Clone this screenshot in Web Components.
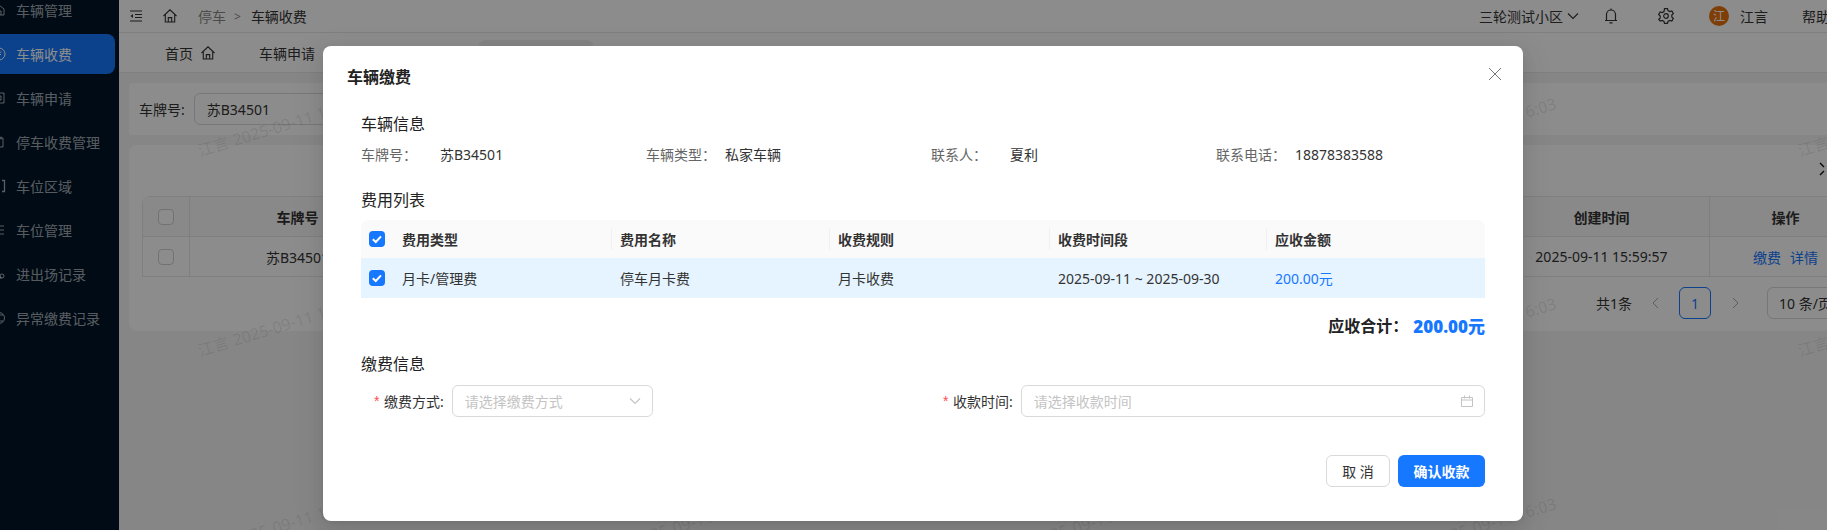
<!DOCTYPE html>
<html lang="zh">
<head>
<meta charset="utf-8">
<title>车辆收费</title>
<style>
  html, body { margin: 0; height: 100%; overflow: hidden; }
  body { font-family: "Noto Sans", "Noto Sans CJK SC", sans-serif; font-size: 14px; color: #333; }
</style>
</head>
<body>
<park-app></park-app>
<script>
const ICON = {
  home: '<svg viewBox="0 0 16 16" width="16" height="16" fill="none" stroke="currentColor" stroke-width="1.1"><path d="M1.5 8 8 1.8 14.5 8M3.3 6.6V14h9.4V6.6M6.3 14V9.6h3.4V14"/></svg>',
  fold: '<svg viewBox="0 0 14 14" width="14" height="14" fill="none" stroke="currentColor" stroke-width="1.2"><path d="M1 2h12M6 5.5h7M6 8.5h7M1 12h12"/><path d="M4 5 1.5 7 4 9z" fill="currentColor" stroke="none"/></svg>',
  bell: '<svg viewBox="0 0 16 16" width="16" height="16" fill="none" stroke="currentColor" stroke-width="1.2"><path d="M3.5 12.5V6.5a4.5 4.5 0 0 1 9 0v6M2 12.5h12M6.5 14.8h3M8 .6V2"/></svg>',
  gear: '<svg viewBox="0 0 16 16" width="16" height="16" fill="none" stroke="currentColor" stroke-width="1.2"><path d="M6.5 1.2h3l.5 2 1.8 1 2-.6 1.5 2.6-1.5 1.5v1.9l1.5 1.4-1.5 2.6-2-.6-1.8 1-.5 2h-3l-.5-2-1.8-1-2 .6L.7 12l1.5-1.4V8.7L.7 7.2l1.5-2.6 2 .6 1.8-1z" transform="translate(0 -.6)"/><circle cx="8" cy="8" r="2.3"/></svg>',
  down: '<svg viewBox="0 0 12 12" width="12" height="12" fill="none" stroke="currentColor" stroke-width="1.1"><path d="M1 3.5 6 8.5 11 3.5"/></svg>',
  cal: '<svg viewBox="0 0 12 12" width="12" height="12" fill="none" stroke="currentColor" stroke-width="1"><path d="M.5 2.5h11v9H.5zM.5 5h11M3.5 .5v3M8.5 .5v3"/></svg>',
  close: '<svg viewBox="0 0 14 14" width="14" height="14" fill="none" stroke="currentColor" stroke-width="1"><path d="M1 1l12 12M13 1 1 13"/></svg>',
  expand: '<svg viewBox="0 0 14 14" width="14" height="14" fill="none" stroke="currentColor" stroke-width="1.4"><path d="M1 1l4 4M13 13 9 9M1 13l4-4M13 1 9 5"/></svg>',
  left: '<svg viewBox="0 0 7 12" width="7" height="12" fill="none" stroke="currentColor"><path d="M6 1 1 6l5 5"/></svg>',
  right: '<svg viewBox="0 0 7 12" width="7" height="12" fill="none" stroke="currentColor"><path d="M1 1l5 5-5 5"/></svg>',
  car: '<svg viewBox="0 0 14 14" width="14" height="14" fill="none" stroke="currentColor"><path d="M2 12V6l5-4 5 4v6zM5 12V8h4v4"/></svg>',
  coin: '<svg viewBox="0 0 14 14" width="14" height="14" fill="none" stroke="currentColor"><circle cx="7" cy="7" r="6"/><path d="M5 4.5 7 7l2-2.5M5 7.5h4M7 7v3"/></svg>',
  form: '<svg viewBox="0 0 14 14" width="14" height="14" fill="none" stroke="currentColor"><path d="M2 2h10v10H2zM5 5h4v4H5z"/></svg>',
  doc: '<svg viewBox="0 0 14 14" width="14" height="14" fill="none" stroke="currentColor"><path d="M3 3h8v9H3zM5 1.5v3M9 1.5v3"/></svg>',
  area: '<svg viewBox="0 0 14 14" width="14" height="14" fill="none" stroke="currentColor" stroke-width="1.3"><path d="M4 1.5H1.5v11H4M10 1.5h2.5v11H10"/></svg>',
  list: '<svg viewBox="0 0 14 14" width="14" height="14" fill="none" stroke="currentColor"><path d="M2 3h10M2 7h10M2 11h10"/></svg>',
  log: '<svg viewBox="0 0 14 14" width="14" height="14" fill="none" stroke="currentColor"><circle cx="5" cy="4" r="2"/><path d="M1 12c0-3 2-4 4-4s4 1 4 4"/><circle cx="10" cy="9" r="2"/></svg>',
  warn: '<svg viewBox="0 0 14 14" width="14" height="14" fill="none" stroke="currentColor"><circle cx="7" cy="7" r="5.5"/><path d="M3 4h8M3 10h8"/></svg>'
};

class SideNav extends HTMLElement {
  constructor() {
    super();
    this.attachShadow({ mode: 'open' });
    const items = [
      ['车辆管理', ICON.car], ['车辆收费', ICON.coin, true], ['车辆申请', ICON.form], ['停车收费管理', ICON.doc],
      ['车位区域', ICON.area], ['车位管理', ICON.list], ['进出场记录', ICON.log], ['异常缴费记录', ICON.warn]
    ];
    this.shadowRoot.innerHTML = `
      <style>
        :host { display: block; width: 119px; flex: none; background: #001529; overflow: hidden; color: rgba(255,255,255,.65); font-size: 14px; }
        ul { list-style: none; margin: -10px 0 0; padding: 0; display: flex; flex-direction: column; gap: 4px; }
        li { height: 40px; width: 135px; margin-left: -20px; padding-left: 12px; box-sizing: border-box; display: flex; align-items: center; gap: 10px; border-radius: 8px; white-space: nowrap; }
        li.on { background: #1677ff; color: #fff; }
        svg { display: block; flex: none; }
      </style>
      <ul>${items.map(([t, i, on]) => `<li class="${on ? 'on' : ''}">${i}<span>${t}</span></li>`).join('')}</ul>
    `;
  }
}
customElements.define('side-nav', SideNav);

class TopBar extends HTMLElement {
  constructor() {
    super();
    this.attachShadow({ mode: 'open' });
    this.shadowRoot.innerHTML = `
      <style>
        :host { display: flex; align-items: center; height: 32px; flex: none; padding-left: 10px; background: #fff; border-bottom: 1px solid #e8e8e8; font-size: 14px; color: #333; white-space: nowrap; }
        svg { display: block; flex: none; }
        .home { margin-left: 19px; }
        .crumb { margin-left: 20px; color: #888; }
        .sep { margin: 0 10px 0 8px; color: #888; font-size: 12px; }
        .right { margin-left: auto; display: flex; align-items: center; margin-right: -3px; }
        .ava { width: 20px; height: 20px; border-radius: 50%; background: #e8710a; color: #fff; font-size: 12px; display: grid; place-items: center; }
      </style>
      ${ICON.fold}
      <span class="home">${ICON.home}</span>
      <span class="crumb">停车</span><span class="sep">&gt;</span><span>车辆收费</span>
      <div class="right">
        <span>三轮测试小区</span>
        <span style="margin-left:4px">${ICON.down}</span>
        <span style="margin-left:24px">${ICON.bell}</span>
        <span style="margin-left:39px">${ICON.gear}</span>
        <span class="ava" style="margin-left:35px">江</span>
        <span style="margin-left:11px">江言</span>
        <span style="margin-left:34px">帮助</span>
      </div>
    `;
  }
}
customElements.define('top-bar', TopBar);

class TabStrip extends HTMLElement {
  constructor() {
    super();
    this.attachShadow({ mode: 'open' });
    this.shadowRoot.innerHTML = `
      <style>
        :host { display: flex; height: 39px; flex: none; background: #fff; border-bottom: 1px solid #e8e8e8; font-size: 14px; padding-left: 46px; white-space: nowrap; }
        span { display: flex; align-items: center; }
        .first { gap: 7px; }
        .act { width: 114px; box-sizing: border-box; margin-top: 7px; background: #f0f0f0; color: #1677ff; padding: 0 0 7px 23px; border-radius: 6px 6px 0 0; }
      </style>
      <span class="first">首页${ICON.home}</span>
      <span style="margin-left:43px">车辆申请</span>
      <span style="margin-left:68px">车辆管理</span>
      <span class="act" style="margin-left:40px">车辆收费</span>
      <span style="margin-left:29px">车位区域</span>
      <span style="margin-left:62px">车位管理</span>
      <span style="margin-left:76px">进出场记录</span>
      <span style="margin-left:78px">异常缴费记录</span>
    `;
  }
}
customElements.define('tab-strip', TabStrip);

class BgTable extends HTMLElement {
  constructor() {
    super();
    this.attachShadow({ mode: 'open' });
    this.shadowRoot.innerHTML = `
      <style>
        :host { display: block; font-size: 14px; color: #333; }
        .grid { display: grid; width: max-content; grid-template-columns: 47px 216px 1088px 216px 152px; grid-template-rows: 40px 40px; border-left: 1px solid #e8e8e8; border-top: 1px solid #e8e8e8; border-radius: 8px 0 0 0; white-space: nowrap; }
        .grid > div { display: flex; align-items: center; justify-content: center; border-right: 1px solid #e8e8e8; border-bottom: 1px solid #e8e8e8; }
        .h { background: #fafafa; font-weight: 700; }
        i { display: block; width: 16px; height: 16px; box-sizing: border-box; border: 1px solid #d0d0d0; border-radius: 4px; background: #fff; }
        .ops { gap: 9px; color: #1677ff; }
        .pager { display: flex; align-items: center; width: max-content; height: 32px; margin-top: 10px; padding-left: 1454px; white-space: nowrap; }
        .cur { width: 32px; height: 32px; border: 1px solid #1677ff; border-radius: 6px; display: grid; place-items: center; color: #1677ff; box-sizing: border-box; margin: 0 21px 0 20px; }
        .size { width: 100px; height: 32px; box-sizing: border-box; border: 1px solid #d9d9d9; border-radius: 6px; padding: 0 11px; display: flex; align-items: center; margin-left: 28px; }
        .arrow { color: #aaa; }
        svg { display: block; }
      </style>
      <div class="grid">
        <div class="h"><i></i></div><div class="h">车牌号</div><div class="h"></div><div class="h">创建时间</div><div class="h">操作</div>
        <div><i></i></div><div>苏B34501</div><div></div><div>2025-09-11 15:59:57</div><div class="ops"><span>缴费</span><span>详情</span></div>
      </div>
      <div class="pager">
        <span style="width:36px;margin-right:20px">共1条</span><span class="arrow">${ICON.left}</span><span class="cur">1</span><span class="arrow">${ICON.right}</span><span class="size">10 条/页</span>
      </div>
    `;
  }
}
customElements.define('bg-table', BgTable);

class PageContent extends HTMLElement {
  constructor() {
    super();
    this.attachShadow({ mode: 'open' });
    this.shadowRoot.innerHTML = `
      <style>
        :host { display: block; flex: 1; padding: 10px 0 0 10px; background: #f5f5f5; overflow: hidden; font-size: 14px; color: #333; }
        .filter { height: 52px; background: #fff; display: flex; align-items: center; padding-left: 10px; border-radius: 4px 0 0 4px; white-space: nowrap; }
        .input { margin-left: 9px; width: 280px; height: 32px; box-sizing: border-box; border: 1px solid #d9d9d9; border-radius: 6px; display: flex; align-items: center; padding-left: 12px; }
        .card { margin-top: 10px; height: 186px; background: #fff; border-radius: 8px 0 0 8px; padding: 51px 0 0 13px; box-sizing: border-box; position: relative; overflow: hidden; }
        .exp { position: absolute; right: 0; top: 16px; width: 8px; overflow: hidden; color: #111; }
      </style>
      <div class="filter"><span>车牌号:</span><div class="input">苏B34501</div></div>
      <div class="card"><span class="exp">${ICON.expand}</span><bg-table></bg-table></div>
    `;
  }
}
customElements.define('page-content', PageContent);

class WaterMark extends HTMLElement {
  constructor() {
    super();
    this.attachShadow({ mode: 'open' });
    let marks = '';
    for (let y = 0; y < 3; y++) {
      for (let x = 0; x < 5; x++) {
        marks += `<span style="left:${198 + x * 400}px;top:${y * 200 + 138}px">江言 2025-09-11 16:03</span>`;
      }
    }
    this.shadowRoot.innerHTML = `
      <style>
        :host { position: absolute; inset: 0; overflow: hidden; pointer-events: none; font-size: 16px; color: rgba(0,0,0,.1); }
        span { position: absolute; white-space: nowrap; transform: rotate(-17deg); transform-origin: 0 50%; }
      </style>
      ${marks}
    `;
  }
}
customElements.define('water-mark', WaterMark);

class InfoItem extends HTMLElement {
  constructor() {
    super();
    this.attachShadow({ mode: 'open' });
    this.shadowRoot.innerHTML = `
      <style>
        :host { display: flex; font-size: 14px; line-height: 20px; white-space: nowrap; }
        .k { width: 79px; color: #666; }
        .v { color: #333; }
      </style>
      <span class="k">${this.getAttribute('label')}：</span><span class="v"><slot></slot></span>
    `;
  }
}
customElements.define('info-item', InfoItem);

class CheckMark extends HTMLElement {
  constructor() {
    super();
    this.attachShadow({ mode: 'open' });
    this.shadowRoot.innerHTML = `
      <style>
        :host { display: block; width: 16px; height: 16px; border-radius: 4px; background: #1677ff; }
        svg { display: block; }
      </style>
      <svg viewBox="0 0 16 16" width="16" height="16" fill="none" stroke="#fff" stroke-width="2"><path d="M3.8 8.2 6.8 11l5.2-5.6"/></svg>
    `;
  }
}
customElements.define('check-mark', CheckMark);

class FeeTable extends HTMLElement {
  constructor() {
    super();
    this.attachShadow({ mode: 'open' });
    this.shadowRoot.innerHTML = `
      <style>
        :host { display: block; font-size: 14px; color: #333; }
        .row { display: grid; grid-template-columns: 32px 218px 218px 220px 217px 1fr; align-items: center; }
        .head { background: #fafafa; font-weight: 700; border-radius: 8px 8px 0 0; height: 38px; }
        .body { background: #e6f4ff; height: 40px; }
        .row > div { padding-left: 9px; position: relative; white-space: nowrap; }
        .row > div:first-child { padding-left: 8px; }
        .head > div:not(:first-child):not(:nth-child(2))::before { content: ''; position: absolute; left: 0; top: 50%; height: 22px; margin-top: -11px; width: 1px; background: #f0f0f0; }
        .money { color: #1677ff; }
      </style>
      <div class="row head">
        <div><check-mark></check-mark></div><div>费用类型</div><div>费用名称</div><div>收费规则</div><div>收费时间段</div><div>应收金额</div>
      </div>
      <div class="row body">
        <div><check-mark></check-mark></div><div>月卡/管理费</div><div>停车月卡费</div><div>月卡收费</div><div>2025-09-11 ~ 2025-09-30</div><div class="money">200.00元</div>
      </div>
    `;
  }
}
customElements.define('fee-table', FeeTable);

class FormField extends HTMLElement {
  constructor() {
    super();
    this.attachShadow({ mode: 'open' });
    const icon = this.getAttribute('icon') === 'cal' ? ICON.cal : ICON.down;
    this.shadowRoot.innerHTML = `
      <style>
        :host { display: flex; align-items: center; font-size: 14px; color: #333; white-space: nowrap; }
        .star { color: #ff4d4f; width: 10px; flex: none; font-family: "Liberation Sans", sans-serif; }
        .box { margin-left: 8px; flex: 1; height: 32px; box-sizing: border-box; border: 1px solid #d9d9d9; border-radius: 6px; display: flex; align-items: center; justify-content: space-between; padding: 0 11px 0 12px; color: #c4c4c4; }
        svg { display: block; }
      </style>
      <span class="star">*</span><span>${this.getAttribute('label')}:</span>
      <div class="box"><span>${this.getAttribute('placeholder')}</span>${icon}</div>
    `;
  }
}
customElements.define('form-field', FormField);

class PayDialog extends HTMLElement {
  constructor() {
    super();
    this.attachShadow({ mode: 'open' });
    this.shadowRoot.innerHTML = `
      <style>
        :host { position: absolute; left: 323px; top: 46px; width: 1200px; height: 475px; box-sizing: border-box; background: #fff; border-radius: 8px; padding: 20px 38px 0 24px; color: #333; box-shadow: 0 6px 16px 0 rgba(0,0,0,.08), 0 3px 6px -4px rgba(0,0,0,.12), 0 9px 28px 8px rgba(0,0,0,.05); }
        h2 { margin: 0; font-size: 16px; line-height: 22px; font-weight: 700; color: #222; }
        .close { position: absolute; left: 1165px; top: 21px; color: #777; }
        svg { display: block; }
        .body { padding-left: 14px; }
        h3 { margin: 0; font-size: 16px; line-height: 22px; font-weight: 400; color: #222; }
        .info { display: grid; grid-template-columns: 285px 285px 285px 1fr; margin-top: 10px; }
        .total { display: flex; justify-content: flex-end; align-items: center; gap: 5px; margin-top: 13px; height: 28px; font-size: 16px; font-weight: 700; color: #222; }
        .total b { font-size: 17px; color: #1677ff; }
        .form { display: grid; grid-template-columns: 279px 1fr; column-gap: 290px; margin-top: 10px; padding-left: 13px; }
        .foot { display: flex; justify-content: flex-end; gap: 8px; margin-top: 38px; font-size: 14px; }
        button { font: inherit; height: 32px; border-radius: 6px; box-sizing: border-box; padding: 0; }
        .ghost { width: 64px; background: #fff; border: 1px solid #d9d9d9; color: #333; }
        .primary { width: 87px; background: #1677ff; border: 0; color: #fff; font-weight: 700; }
      </style>
      <h2>车辆缴费</h2>
      <span class="close">${ICON.close}</span>
      <div class="body">
        <h3 style="margin-top:25px">车辆信息</h3>
        <div class="info">
          <info-item label="车牌号">苏B34501</info-item>
          <info-item label="车辆类型">私家车辆</info-item>
          <info-item label="联系人">夏利</info-item>
          <info-item label="联系电话">18878383588</info-item>
        </div>
        <h3 style="margin-top:24px;margin-bottom:9px">费用列表</h3>
        <fee-table></fee-table>
        <div class="total"><span>应收合计：</span><b>200.00元</b></div>
        <h3 style="margin-top:14px">缴费信息</h3>
        <div class="form">
          <form-field label="缴费方式" placeholder="请选择缴费方式"></form-field>
          <form-field label="收款时间" placeholder="请选择收款时间" icon="cal"></form-field>
        </div>
        <div class="foot"><button class="ghost">取 消</button><button class="primary">确认收款</button></div>
      </div>
    `;
  }
}
customElements.define('pay-dialog', PayDialog);

class ParkApp extends HTMLElement {
  constructor() {
    super();
    this.attachShadow({ mode: 'open' });
    this.shadowRoot.innerHTML = `
      <style>
        :host { display: flex; position: relative; width: 1827px; height: 530px; overflow: hidden; }
        .main { flex: 1; min-width: 0; display: flex; flex-direction: column; }
        .mask { position: absolute; inset: 0; background: rgba(0,0,0,.45); }
      </style>
      <side-nav></side-nav>
      <div class="main"><top-bar></top-bar><tab-strip></tab-strip><page-content></page-content></div>
      <water-mark></water-mark>
      <div class="mask"></div>
      <pay-dialog></pay-dialog>
    `;
  }
}
customElements.define('park-app', ParkApp);
</script>
</body>
</html>
